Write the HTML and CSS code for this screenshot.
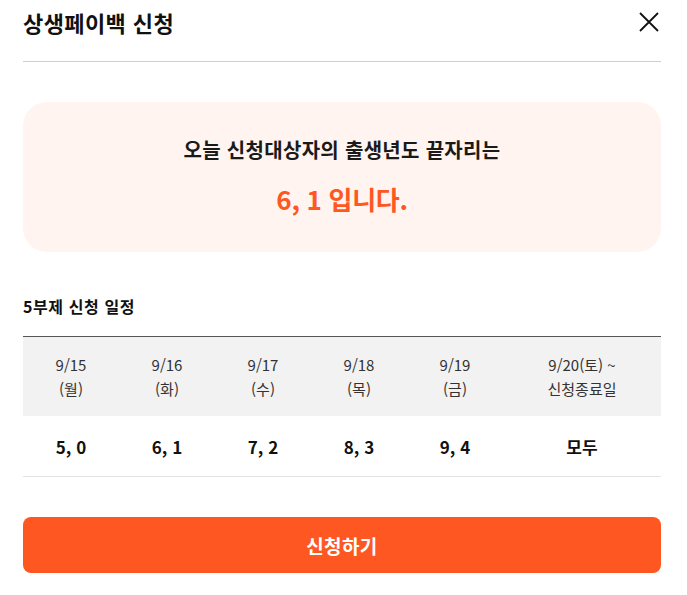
FILE: index.html
```html
<!DOCTYPE html>
<html lang="ko">
<head>
<meta charset="utf-8">
<link rel="stylesheet" href="styles.css">
</head>
<body>
<div class="modal">
  <header class="head">
    <h1 class="title">상생페이백 신청</h1>
    <button class="close" aria-label="닫기">
      <svg width="20" height="20" viewBox="0 0 20 20"><path d="M1 1 L19 19 M19 1 L1 19" stroke="#111" stroke-width="1.8" fill="none"/></svg>
    </button>
  </header>
  <div class="card">
    <p class="card-line">오늘 신청대상자의 출생년도 끝자리는</p>
    <p class="card-num">6, 1 입니다.</p>
  </div>
  <h2 class="sub">5부제 신청 일정</h2>
  <div class="table">
    <div class="row thead">
      <div class="cell">9/15<br>(월)</div>
      <div class="cell">9/16<br>(화)</div>
      <div class="cell">9/17<br>(수)</div>
      <div class="cell">9/18<br>(목)</div>
      <div class="cell">9/19<br>(금)</div>
      <div class="cell">9/20(토) ~<br>신청종료일</div>
    </div>
    <div class="row tbody">
      <div class="cell">5, 0</div>
      <div class="cell">6, 1</div>
      <div class="cell">7, 2</div>
      <div class="cell">8, 3</div>
      <div class="cell">9, 4</div>
      <div class="cell">모두</div>
    </div>
  </div>
  <button class="apply">신청하기</button>
</div>
</body>
</html>
```
FILE: styles.css
```css
* { box-sizing: border-box; }
html, body { margin: 0; padding: 0; background: #fff; }
body { font-family: "Noto Sans CJK KR", "Noto Sans", sans-serif; color: #111; }
.modal { width: 687px; padding: 0 26px 0 23px; }
.head { display: flex; align-items: center; justify-content: space-between; height: 62px; border-bottom: 1px solid #cfcfcf; padding-bottom: 17px; }
.title { margin: 0; font-size: 22px; font-weight: 700; letter-spacing: 0.4px; line-height: 30px; }
.close { border: 0; background: none; padding: 0; width: 20px; height: 20px; margin-right: 2px; display: flex; cursor: pointer; }
.card { margin-top: 40px; height: 150px; background: #fff4f0; border-radius: 24px; display: flex; flex-direction: column; align-items: center; justify-content: center; padding-bottom: 2px; }
.card-line { margin: 0; font-size: 20px; font-weight: 700; letter-spacing: 0.3px; line-height: 26px; color: #1a1a1a; }
.card-num { margin: 20px 0 0; font-size: 26px; font-weight: 700; color: #ff5722; line-height: 32px; letter-spacing: -0.3px; }
.sub { margin: 43px 0 0; font-size: 16px; font-weight: 700; line-height: 22px; letter-spacing: 0.6px; }
.table { margin-top: 19px; border-top: 1px solid #555; }
.row { display: grid; grid-template-columns: 96px 96px 96px 96px 96px 1fr; }
.cell { text-align: center; display: flex; align-items: center; justify-content: center; }
.thead { background: #f2f2f2; height: 79px; font-size: 15px; line-height: 24px; color: #333; font-weight: 400; }
.tbody { height: 61px; border-bottom: 1px solid #e2e4e8; font-size: 17px; font-weight: 700; color: #111; }
.apply { display: block; width: 100%; margin-top: 40px; height: 56px; border: 0; border-radius: 8px; background: #ff5722; color: #fff; font-family: inherit; font-size: 19px; font-weight: 700; letter-spacing: 0.4px; }
```
